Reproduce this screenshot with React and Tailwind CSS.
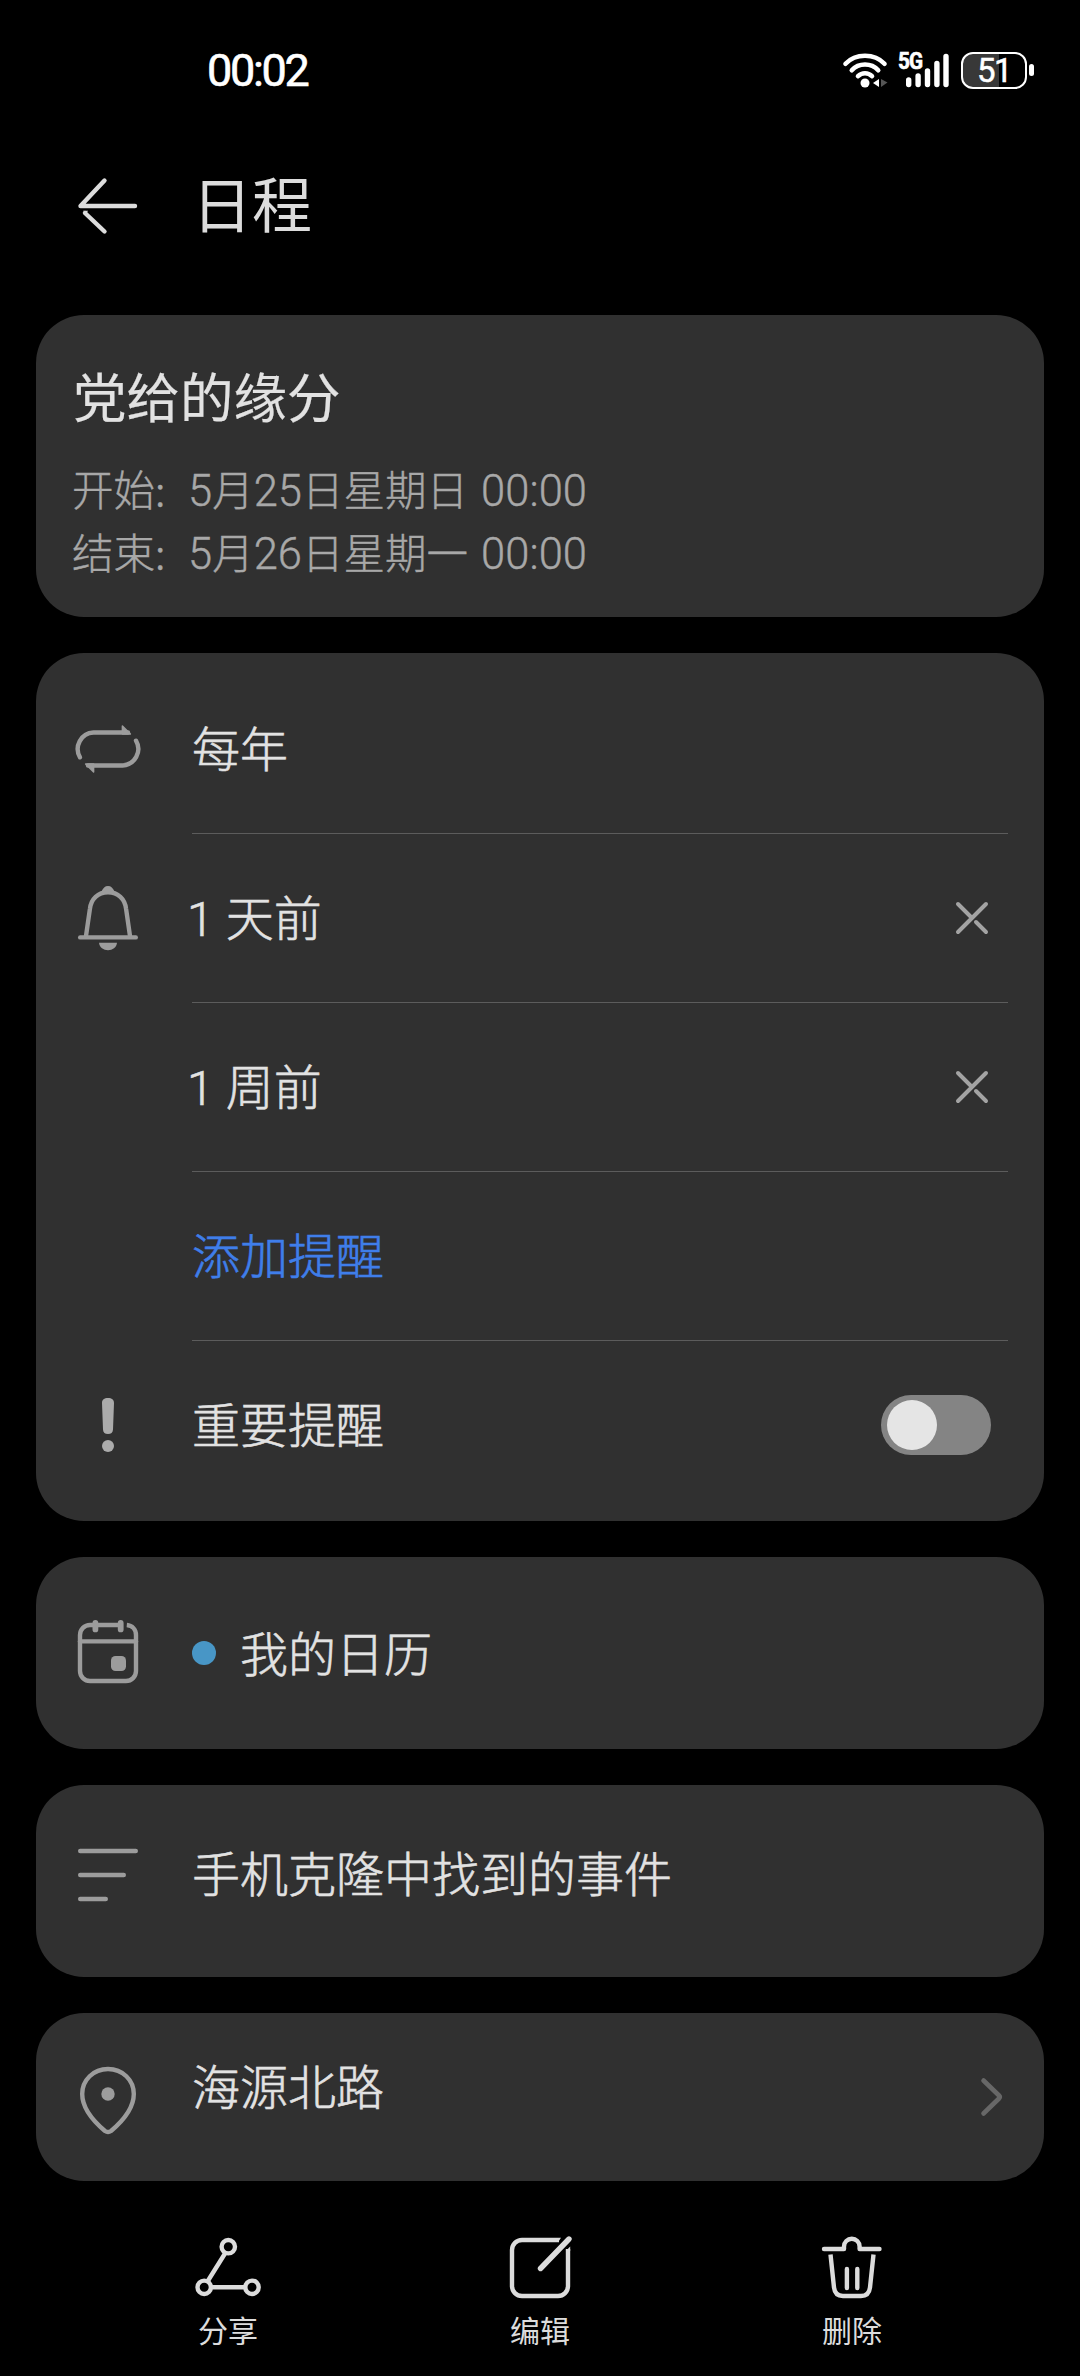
import React from 'react';

// 72x72 line icon frame shared by the rows, the header and the bottom bar
function Icon({ className = 'text-[#9c9c9c]', children }) {
  return (
    <svg
      viewBox="0 0 72 72"
      className={`h-[72px] w-[72px] shrink-0 ${className}`}
      fill="none"
      stroke="currentColor"
      strokeWidth="4.4"
      strokeLinecap="round"
      strokeLinejoin="round"
    >
      {children}
    </svg>
  );
}

function BackIcon() {
  return (
    <Icon className="text-[#dcdcdc]">
      <path d="M63 36H8.500L32.500 10.500" />
      <path d="M13 43L32.500 61.500" />
      <path d="M11 40.800H16L14 44z" fill="currentColor" stroke="none" />
    </Icon>
  );
}

function RepeatIcon() {
  const half = (
    <>
      <path d="M8 44.300A16.500 16.500 0 0 1 21.500 19.500H56" />
      <path d="M50.400 13L58.400 21H50.400z" fill="currentColor" strokeWidth="1.500" />
    </>
  );
  return (
    <Icon>
      {half}
      <g transform="rotate(180 36 36)">{half}</g>
    </Icon>
  );
}

function BellIcon() {
  return (
    <Icon>
      <path d="M14 54L17.900 27C19 17 26 10.300 36 10.300S53 17 54.100 27L58 54" />
      <path d="M8.200 55.400H63.800" />
      <path d="M29.500 9.500C31 6 33 4 36 4S41 6 42.500 9.500L44 12H28z" fill="currentColor" stroke="none" />
      <path d="M27 60.800H45C44.500 65.500 40.500 68.300 36 68.300S27.500 65.500 27 60.800z" fill="currentColor" stroke="none" />
    </Icon>
  );
}

function ImportantIcon() {
  return (
    <Icon className="text-[#ababab]">
      <g fill="currentColor" stroke="none">
        <path d="M30 14C30 10.800 32.200 9 36 9S42 10.800 42 14L41 40.500C40.900 43.500 39 45 36 45S31.100 43.500 31 40.500z" />
        <circle cx="36" cy="57" r="6" />
      </g>
    </Icon>
  );
}

function CalendarIcon() {
  return (
    <Icon>
      <path strokeLinecap="butt" d="M54.800 8C60.300 8.500 64 12.500 64 18V54A10 10 0 0 1 54 64H18A10 10 0 0 1 8 54V18A10 10 0 0 1 18 8H49" />
      <path d="M8 24.400H64" />
      <path d="M23.400 6V12.400M48.700 6V12.400" strokeWidth="5.800" />
      <rect x="39" y="39" width="15" height="15" rx="4.500" fill="currentColor" stroke="none" />
    </Icon>
  );
}

function NotesIcon() {
  return (
    <Icon>
      <path d="M8.200 12H63.800M8.200 36H51.800M8.200 60H33.800" />
    </Icon>
  );
}

function PinIcon() {
  return (
    <Icon>
      <path d="M36 5C50.500 5 61.800 16 61.800 30C61.800 44 52 56 39 67Q36 69 33 67C20 56 10.200 44 10.200 30C10.200 16 21.500 5 36 5z" />
      <circle cx="36" cy="30" r="6.700" fill="currentColor" stroke="none" />
    </Icon>
  );
}

function ShareIcon() {
  return (
    <Icon className="text-[#dcdcdc]">
      <circle cx="36.300" cy="14.700" r="6.700" />
      <circle cx="12.200" cy="55.300" r="6.700" />
      <circle cx="60" cy="55.300" r="6.700" />
      <path d="M33 21.500L15.800 49M19.500 55.300H53" />
    </Icon>
  );
}

function EditIcon() {
  return (
    <Icon className="text-[#dcdcdc]">
      <path strokeLinecap="butt" d="M55 8H18A10 10 0 0 0 8 18V54A10 10 0 0 0 18 64H54A10 10 0 0 0 64 54V17" />
      <path d="M36.500 36.500L65 7" strokeWidth="5.400" />
      <path d="M55 5.800H57L54 10.200zM61.800 19L66.200 14.500V19z" fill="currentColor" stroke="none" />
    </Icon>
  );
}

function TrashIcon() {
  return (
    <Icon className="text-[#dcdcdc]">
      <path d="M8 17H28V14.500A7.800 7.800 0 0 1 43.600 14.500V17H63.500" />
      <path strokeLinecap="butt" d="M14.500 22.500L18 55.500Q19 64 27 64H45Q53 64 54 55.500L57.500 22.500" />
      <path d="M30.900 37V56M41.300 37V56" />
    </Icon>
  );
}

function RemoveButton() {
  return (
    <button type="button" className="mr-3 text-[#a3a3a3]">
      <svg viewBox="0 0 48 48" className="h-12 w-12" fill="none" stroke="currentColor" strokeWidth="4" strokeLinecap="round">
        <path d="M38 10L10 38M10 10L23 23M28 28L38 38" />
      </svg>
    </button>
  );
}

function StatusBar() {
  return (
    <div className="flex h-[140px] shrink-0 items-center justify-between pl-[207px] pr-[46px] font-['Roboto',sans-serif] text-white">
      <div className="text-[45px] font-normal leading-none tracking-[-2.3px] [-webkit-text-stroke:0.6px]">00:02</div>
      <div className="flex items-center">
        <svg viewBox="0 0 48 38" className="h-[38px] w-12" fill="none" stroke="currentColor" strokeLinecap="round" strokeWidth="4.600">
          <path d="M4.500 12.800Q12 4.800 24 4.800T43.500 12.800" />
          <path d="M10.800 19.200Q16 13.500 24 13.500T37.200 19.200" />
          <path d="M17 25.200Q20 22.200 24 22.200T31 25.200" />
          <circle cx="24" cy="32" r="4.500" fill="currentColor" stroke="none" />
          <path d="M32 32L38 28V36z" fill="currentColor" stroke="none" />
          <path d="M40 28L46.500 31.500L40 36z" fill="#555" stroke="none" />
        </svg>
        <div className="relative ml-2 h-[38px] w-[52px]">
          <span className="absolute left-[1px] top-[-1px] origin-left scale-x-90 text-[23px] font-bold leading-[24px] tracking-[-1px]">5G</span>
          <svg viewBox="0 0 52 38" className="h-full w-full" fill="none" stroke="currentColor" strokeLinecap="round" strokeWidth="5.400">
            <path d="M11.700 29V33.500M21.100 25V33.500M30.500 20V33.500M39.900 12.500V33.500M49 5.500V33.500" />
          </svg>
        </div>
        <div className="ml-3 flex h-[37px] w-[66px] items-center justify-center rounded-[12px] border-[2.5px] border-white bg-[linear-gradient(to_right,#383838_58%,transparent_58%)]">
          <span className="text-[33px] font-normal leading-[33px] tracking-[-1.5px] [-webkit-text-stroke:0.5px]">51</span>
        </div>
        <div className="ml-0.5 h-3 w-[5px] rounded-full bg-white" />
      </div>
    </div>
  );
}

function Card({ className = '', children }) {
  return <section className={`shrink-0 rounded-[48px] bg-[#303030] px-9 ${className}`}>{children}</section>;
}

function Row({ icon, last, action, children }) {
  return (
    <div className="flex">
      <div className="flex h-[168px] w-[120px] shrink-0 items-center">{icon}</div>
      <div
        className={
          last
            ? 'flex h-[168px] flex-1 items-center justify-between'
            : 'flex h-[169px] flex-1 items-center justify-between border-b border-[#5c5c5c]'
        }
      >
        <span className="mb-1.5">{children}</span>
        {action}
      </div>
    </div>
  );
}

// digits use a narrower latin face than the Chinese text
function Num({ className = '', children }) {
  return <span className={`font-['Roboto',sans-serif] leading-none ${className}`}>{children}</span>;
}

const times = [
  { label: '开始:', month: '5', day: '25', week: '日星期日' },
  { label: '结束:', month: '5', day: '26', week: '日星期一' },
];

const reminders = ['天前', '周前'];

const actions = [
  { label: '分享', icon: <ShareIcon /> },
  { label: '编辑', icon: <EditIcon /> },
  { label: '删除', icon: <TrashIcon /> },
];

export default function App() {
  return (
    <div className="flex h-[2376px] w-[1080px] flex-col overflow-hidden bg-black font-['Noto_Sans_CJK_SC',sans-serif] text-[48px] font-light leading-[60px] text-[#e2e2e2] [-webkit-text-stroke:0.6px]">
      <StatusBar />

      <header className="mb-[43px] flex h-[132px] shrink-0 items-center gap-12 px-[72px]">
        <BackIcon />
        <h1 className="mb-[9px] text-[60px] font-normal leading-[72px] text-[#dcdcdc] [-webkit-text-stroke:0px]">日程</h1>
      </header>

      <main className="flex shrink-0 flex-col gap-9 px-9">
        <Card className="h-[302px] pt-[47px]">
          <h2 className="ml-px text-[53.5px] font-normal leading-[66px] [-webkit-text-stroke:0.2px]">党给的缘分</h2>
          <div className="mt-[29px] text-[41.500px] leading-[63px] text-[#a8a8a8] [-webkit-text-stroke:0.4px]">
            {times.map((t) => (
              <div key={t.label} className="h-[63px] whitespace-nowrap">
                <span className="inline-block w-[116px]">{t.label}</span>
                <Num className="text-[43.500px]">{t.month}</Num>月
                <Num className="text-[43.500px]">{t.day}</Num>{t.week}
                <Num className="ml-[13px] text-[43.500px] tracking-[0.1px]">00:00</Num>
              </div>
            ))}
          </div>
        </Card>

        <Card className="py-3">
          <Row icon={<RepeatIcon />}>每年</Row>
          {reminders.map((unit, i) => (
            <Row key={unit} icon={i === 0 ? <BellIcon /> : null} action={<RemoveButton />}>
              <Num className="-ml-[5px] mr-[12px]">1</Num>
              {unit}
            </Row>
          ))}
          <Row>
            <span className="text-[#3f7eea]">添加提醒</span>
          </Row>
          <Row
            last
            icon={<ImportantIcon />}
            action={
              <span className="mr-[17px] flex h-[60px] w-[110px] items-center rounded-full bg-[#848484] pl-1.5">
                <span className="h-[50px] w-[50px] rounded-full bg-[#e5e5e5]" />
              </span>
            }
          >
            重要提醒
          </Row>
        </Card>

        <Card className="flex h-[192px] items-center">
          <CalendarIcon />
          <span className="ml-12 mr-6 h-6 w-6 rounded-full bg-[#4896c6]" />
          <span className="mb-[5px]">我的日历</span>
        </Card>

        <Card className="flex h-[192px] items-start gap-12 pt-[54px]">
          <NotesIcon />
          <span className="mt-[2px]">手机克隆中找到的事件</span>
        </Card>

        <Card className="flex h-[168px] items-start pt-[51px]">
          <PinIcon />
          <span className="-mt-[10px] ml-12 flex-1">海源北路</span>
          <svg viewBox="0 0 24 42" className="mr-1 mt-3 h-[42px] w-6" fill="none" stroke="#676767" strokeWidth="4.600" strokeLinecap="round" strokeLinejoin="round">
            <path d="M3.500 4.500L19 19.500Q20.500 21 19 22.500L3.500 37.500" />
          </svg>
        </Card>
      </main>

      <nav className="flex shrink-0 px-[72px] pt-[51px] text-[#dcdcdc] [-webkit-text-stroke:0px]">
        {actions.map((a) => (
          <button key={a.label} type="button" className="flex flex-1 flex-col items-center">
            {a.icon}
            <span className="mt-[7px] text-[30px] font-normal leading-9">{a.label}</span>
          </button>
        ))}
      </nav>
    </div>
  );
}
